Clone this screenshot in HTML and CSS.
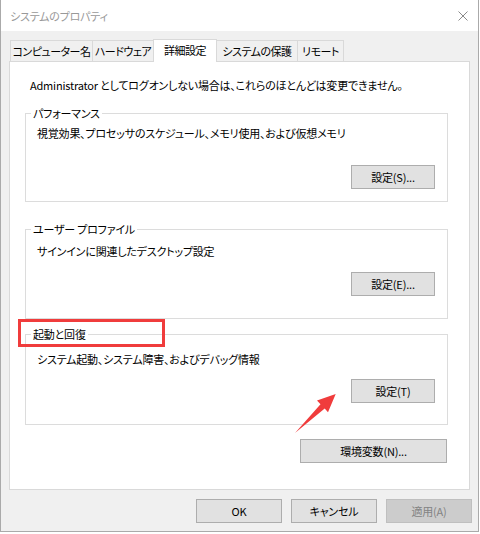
FILE: index.html
```html
<!DOCTYPE html>
<html lang="ja">
<head>
    <meta charset="UTF-8">
    <meta name="viewport" content="width=device-width, initial-scale=1.0">
    <title>システムのプロパティ</title>
    <link rel="stylesheet" href="styles.css">
</head>
<body>

    <div class="window">
        <div class="titlebar">
            <span class="title">システムのプロパティ</span>
            <svg class="close" width="10" height="10" viewBox="0 0 10 10">
                <path d="M0.5 0.5 L9.5 9.5 M9.5 0.5 L0.5 9.5" stroke="#8a8a8a" stroke-width="1" fill="none"/>
            </svg>
        </div>

        <div class="tabs">
            <div class="tab tab-computer">コンピューター名</div>
            <div class="tab tab-hardware">ハードウェア</div>
            <div class="tab tab-advanced active">詳細設定</div>
            <div class="tab tab-protect">システムの保護</div>
            <div class="tab tab-remote">リモート</div>
        </div>

        <div class="panel">
            <p class="intro">Administrator としてログオンしない場合は、これらのほとんどは変更できません。</p>

            <fieldset class="group group-perf">
                <legend>パフォーマンス</legend>
                <p class="desc">視覚効果、プロセッサのスケジュール、メモリ使用、および仮想メモリ</p>
                <div class="actions"><button class="btn">設定(S)...</button></div>
            </fieldset>

            <fieldset class="group group-profile">
                <legend>ユーザー プロファイル</legend>
                <p class="desc">サインインに関連したデスクトップ設定</p>
                <div class="actions"><button class="btn">設定(E)...</button></div>
            </fieldset>

            <fieldset class="group group-startup">
                <legend>起動と回復</legend>
                <p class="desc">システム起動、システム障害、およびデバッグ情報</p>
                <div class="actions"><button class="btn">設定(T)</button></div>
            </fieldset>

            <div class="actions env-row"><button class="btn btn-env">環境変数(N)...</button></div>
        </div>

        <div class="footer">
            <button class="btn btn-dialog">OK</button>
            <button class="btn btn-dialog">キャンセル</button>
            <button class="btn btn-dialog" disabled>適用(A)</button>
        </div>

        <!-- annotation marks -->
        <svg class="marks" width="480" height="534" viewBox="0 0 480 534">
            <rect x="19.5" y="320.5" width="144" height="25" fill="none" stroke="#f03c3c" stroke-width="3"/>
            <polygon points="295,433 320.5,404.2 317,400.6 335.7,394 328,412.2 324.7,408.6" fill="#f03c3c"/>
        </svg>
    </div>

</body>
</html>
```

FILE: styles.css
```css
* {
    margin: 0;
    padding: 0;
    box-sizing: border-box;
}

body {
    font-family: "Noto Sans CJK JP", "Noto Sans", sans-serif;
    font-size: 11px;
    line-height: 16px;
    letter-spacing: -0.2px;
    font-feature-settings: "palt";
    color: #000;
    background: #fff;
}

.window {
    position: relative;
    width: 479px;
    height: 532px;
    background: #f0f0f0;
    border: 1px solid #aaaaaa;
    border-top: none;
}

.titlebar {
    height: 31px;
    background: #fff;
    display: flex;
    align-items: center;
    justify-content: space-between;
    padding: 0 10px 0 9px;
}

.title {
    color: #999;
}

.tabs {
    display: flex;
    align-items: flex-end;
    height: 23px;
    margin-top: 8px;
    padding-left: 9px;
    position: relative;
    z-index: 1;
}

.tab {
    height: 21px;
    border: 1px solid #d9d9d9;
    border-bottom: none;
    margin-right: -1px;
    margin-bottom: 1px;
    text-align: center;
    line-height: 20px;
    letter-spacing: -0.5px;
    white-space: nowrap;
}

.tab-computer { width: 83px; }
.tab-hardware { width: 62px; }
.tab-advanced { width: 64px; }
.tab-protect { width: 82px; }
.tab-remote { width: 47px; }

.tab.active {
    height: 23px;
    margin-bottom: 0;
    background: #fff;
    position: relative;
}

.panel {
    margin: -1px 8px 0;
    background: #fff;
    border: 1px solid #d9d9d9;
    padding: 15px 21px 26px 15px;
}

.intro {
    padding-left: 5px;
    white-space: nowrap;
}

.group {
    border: 1px solid #dcdcdc;
    padding: 0 12px 12px 11px;
    min-width: 0;
}

.group legend {
    margin-left: -6px;
    padding: 0 2px;
}

.actions {
    display: flex;
    justify-content: flex-end;
}

.btn {
    font-family: inherit;
    font-size: 11px;
    letter-spacing: -0.2px;
    font-feature-settings: "palt";
    height: 24px;
    background: #e1e1e1;
    border: 1px solid #adadad;
    color: #000;
}

.group .btn {
    width: 84px;
}

.group-perf {
    margin-top: 12px;
}

.group-perf .desc {
    margin-top: 4px;
}

.group-perf .actions {
    margin-top: 24px;
}

.group-profile {
    margin-top: 19px;
    padding-bottom: 22px;
}

.group-profile .desc {
    margin-top: 6px;
}

.group-profile .actions {
    margin-top: 13px;
}

.group-startup {
    margin-top: 7px;
    padding-bottom: 21px;
}

.group-startup .desc {
    margin-top: 9px;
}

.group-startup .actions {
    margin-top: 12px;
}

.env-row {
    margin-top: 14px;
    padding-right: 1px;
}

.btn-env {
    width: 147px;
}

.footer {
    display: flex;
    justify-content: flex-end;
    gap: 9px;
    margin-top: 9px;
    padding-right: 6px;
}

.btn-dialog {
    width: 86px;
    height: 24px;
}

.btn-dialog:disabled {
    background: #cccccc;
    border-color: #bfbfbf;
    color: #838383;
}

.marks {
    position: absolute;
    left: -1px;
    top: 0;
    pointer-events: none;
}
```
